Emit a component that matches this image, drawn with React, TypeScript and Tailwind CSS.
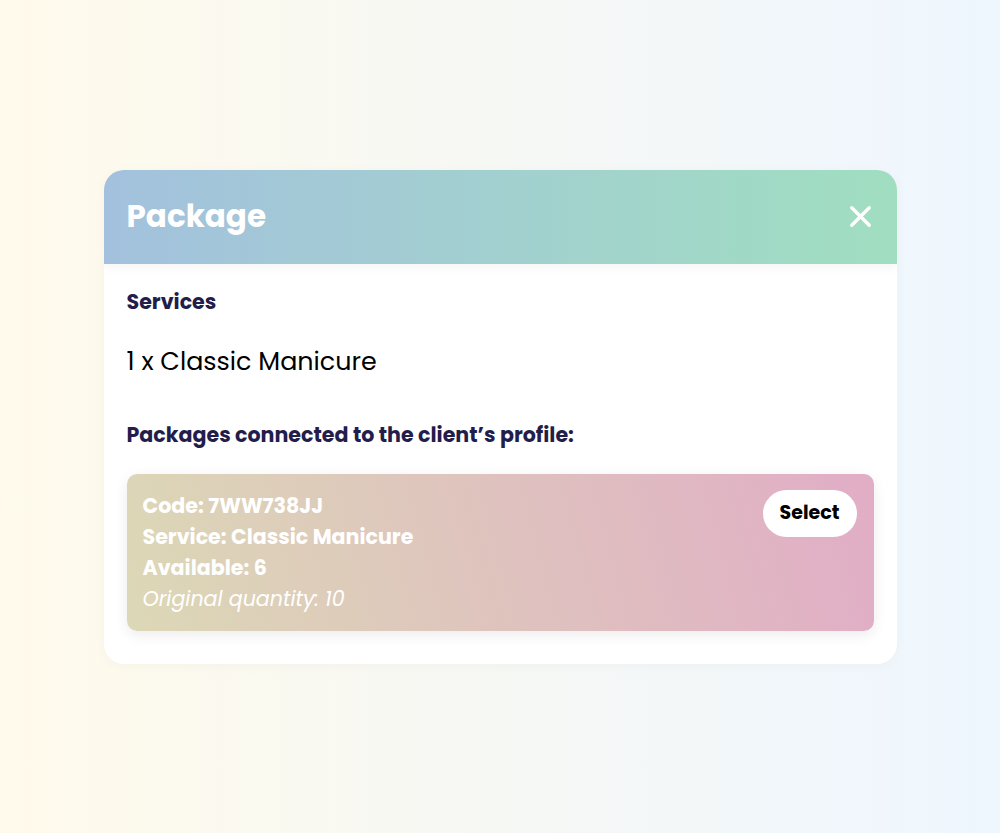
import { X } from "lucide-react";

// --- DATA ---
const pkg = {
  code: "7WW738JJ",
  service: "Classic Manicure",
  available: 6,
  original: 10,
};

export default function App() {
  return (
    <div
      className="min-h-screen w-full flex items-center justify-center bg-linear-to-r from-[#fffaeb] to-[#eef6fe]"
      style={{ fontFamily: "Poppins, Inter, 'Noto Sans', sans-serif" }}
    >
      <div className="w-[793px] rounded-[20px] bg-white overflow-hidden shadow-[0_2px_12px_rgba(0,0,0,0.03)]">
        {/* ── HEADER ── */}
        <div className="relative z-10 h-[94px] flex items-center justify-between pl-[23px] pr-[19px] bg-linear-to-r from-[#a3c1dd] to-[#a0dec0] shadow-[0_4px_10px_rgba(0,0,0,0.04)]">
          <h1 className="text-[31px] font-bold text-white">Package</h1>
          <button className="text-white" aria-label="Close">
            <X size={35} strokeWidth={2.3} />
          </button>
        </div>

        {/* ── BODY ── */}
        <div className="px-[23px] pt-[23px] pb-[33px]">
          <h2 className="text-[20.6px] leading-[30px] font-bold text-[#221d4b]">Services</h2>
          <p className="mt-[26px] text-[25.4px] leading-[36px] text-black">1 x Classic Manicure</p>
          <h2 className="mt-[41px] text-[20.6px] leading-[30px] font-bold text-[#221d4b]">
            Packages connected to the client’s profile:
          </h2>

          <div className="mt-[24px] flex items-start justify-between rounded-[10px] pl-[16px] pr-[17px] pt-[16px] pb-[17px] bg-linear-[75deg] from-[#dcd8b6] to-[#e1adc6] shadow-[0_4px_14px_rgba(0,0,0,0.08)]">
            <div className="text-white text-[20.6px] leading-[31px] font-bold">
              <div>Code: {pkg.code}</div>
              <div>Service: {pkg.service}</div>
              <div>Available: {pkg.available}</div>
              <div className="font-normal italic">Original quantity: {pkg.original}</div>
            </div>
            <button className="h-[47px] w-[94px] rounded-full bg-white text-black text-[19px] font-bold">
              Select
            </button>
          </div>
        </div>
      </div>
    </div>
  );
}
